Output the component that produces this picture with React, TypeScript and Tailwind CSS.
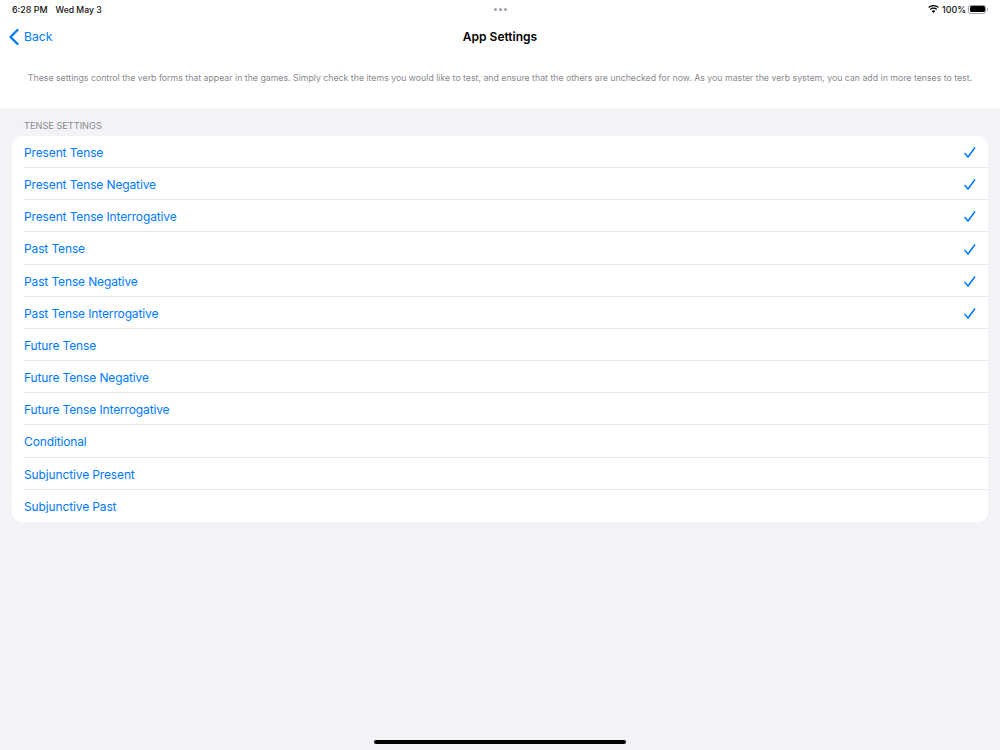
import { ChevronLeft } from "lucide-react";

const tenses = [
  { name: "Present Tense", checked: true },
  { name: "Present Tense Negative", checked: true },
  { name: "Present Tense Interrogative", checked: true },
  { name: "Past Tense", checked: true },
  { name: "Past Tense Negative", checked: true },
  { name: "Past Tense Interrogative", checked: true },
  { name: "Future Tense", checked: false },
  { name: "Future Tense Negative", checked: false },
  { name: "Future Tense Interrogative", checked: false },
  { name: "Conditional", checked: false },
  { name: "Subjunctive Present", checked: false },
  { name: "Subjunctive Past", checked: false },
];

function StatusBar() {
  return (
    <div className="flex h-[18px] items-center justify-between pl-3 pr-[12px] pt-[1px] text-[8.9px] font-medium text-[#111]">
      <div className="flex w-[200px] items-baseline gap-[8px]">
        <span>6:28 PM</span>
        <span className="text-[8.6px]">Wed May 3</span>
      </div>
      <div className="flex gap-[2px]">
        <span className="h-[3px] w-[3px] rounded-full bg-gray-400" />
        <span className="h-[3px] w-[3px] rounded-full bg-gray-400" />
        <span className="h-[3px] w-[3px] rounded-full bg-gray-400" />
      </div>
      <div className="flex w-[200px] items-center justify-end gap-[2px]">
        <svg width="11" height="8" viewBox="0 0 11 8" fill="black" className="mr-[1px]">
          <path d="M5.5 0C3.4 0 1.6.8.2 2.1l.8.9C2.2 1.9 3.8 1.2 5.5 1.2S8.8 1.9 10 3l.8-.9C9.4.8 7.6 0 5.5 0Z" />
          <path d="M5.5 2.6c-1.4 0-2.6.5-3.6 1.4l.8.9c.7-.7 1.7-1.1 2.8-1.1s2.1.4 2.8 1.1l.8-.9c-1-.9-2.2-1.4-3.6-1.4Z" />
          <path d="M5.5 5.2c-.7 0-1.3.3-1.8.7L5.5 8l1.8-2.1c-.5-.4-1.1-.7-1.8-.7Z" />
        </svg>
        <span>100%</span>
        <div className="flex items-center gap-[1px]">
          <div className="flex h-[9px] w-[18px] rounded-[2.5px] border border-gray-400 p-[0.5px]">
            <div className="flex-1 rounded-[1.5px] bg-black" />
          </div>
          <div className="h-[3px] w-[1px] rounded-r-sm bg-gray-400" />
        </div>
      </div>
    </div>
  );
}

export default function App() {
  return (
    <div className="flex h-[750px] w-[1000px] flex-col overflow-hidden bg-[#f2f2f7] font-['Inter','Liberation_Sans',sans-serif]">
      <div className="h-[108px] bg-white">
        <StatusBar />
        <div className="flex h-[36px] items-center justify-between pt-[1px]">
          <div className="flex w-[100px] items-center text-[12.2px] text-[#007aff]">
            <ChevronLeft size={28} strokeWidth={2} className="-mr-[4px]" />
            <span className="pt-[1px]">Back</span>
          </div>
          <div className="text-[12px] font-semibold text-black">App Settings</div>
          <div className="w-[100px]" />
        </div>
        <p className="pt-[18px] text-center text-[8.75px] leading-[12px] text-[#8a8a8e]">
          These settings control the verb forms that appear in the games. Simply check the items you would like to test, and ensure that the others are unchecked for now. As you master the verb system, you can add in more tenses to test.
        </p>
      </div>

      <div className="px-3">
        <div className="flex h-[28px] items-end px-3 pb-[4px] text-[9.2px] leading-[12px] text-[#8a8a8e]">
          TENSE SETTINGS
        </div>
        <div className="overflow-hidden rounded-[9px] bg-white">
          {tenses.map((t, i) => (
            <div key={t.name} className="pl-3">
              <div
                className={`flex h-[32.17px] items-center justify-between pr-[12px] text-[12px] tracking-[-0.13px] text-[#007aff] ${
                  i < tenses.length - 1 ? "border-b border-[#e9e9ec]" : ""
                }`}
              >
                <span className="pt-[2.8px]">{t.name}</span>
                {t.checked && (
                  <svg width="13" height="13" viewBox="0 0 13 13" fill="none" stroke="#007aff" strokeWidth="1.5" className="mt-[2px]">
                    <path d="M1.5 7 L5 11 L12 1.5" />
                  </svg>
                )}
              </div>
            </div>
          ))}
        </div>
      </div>

      <div className="flex flex-1 items-end justify-center pb-[6px]">
        <div className="h-[4px] w-[252px] rounded-full bg-black" />
      </div>
    </div>
  );
}
